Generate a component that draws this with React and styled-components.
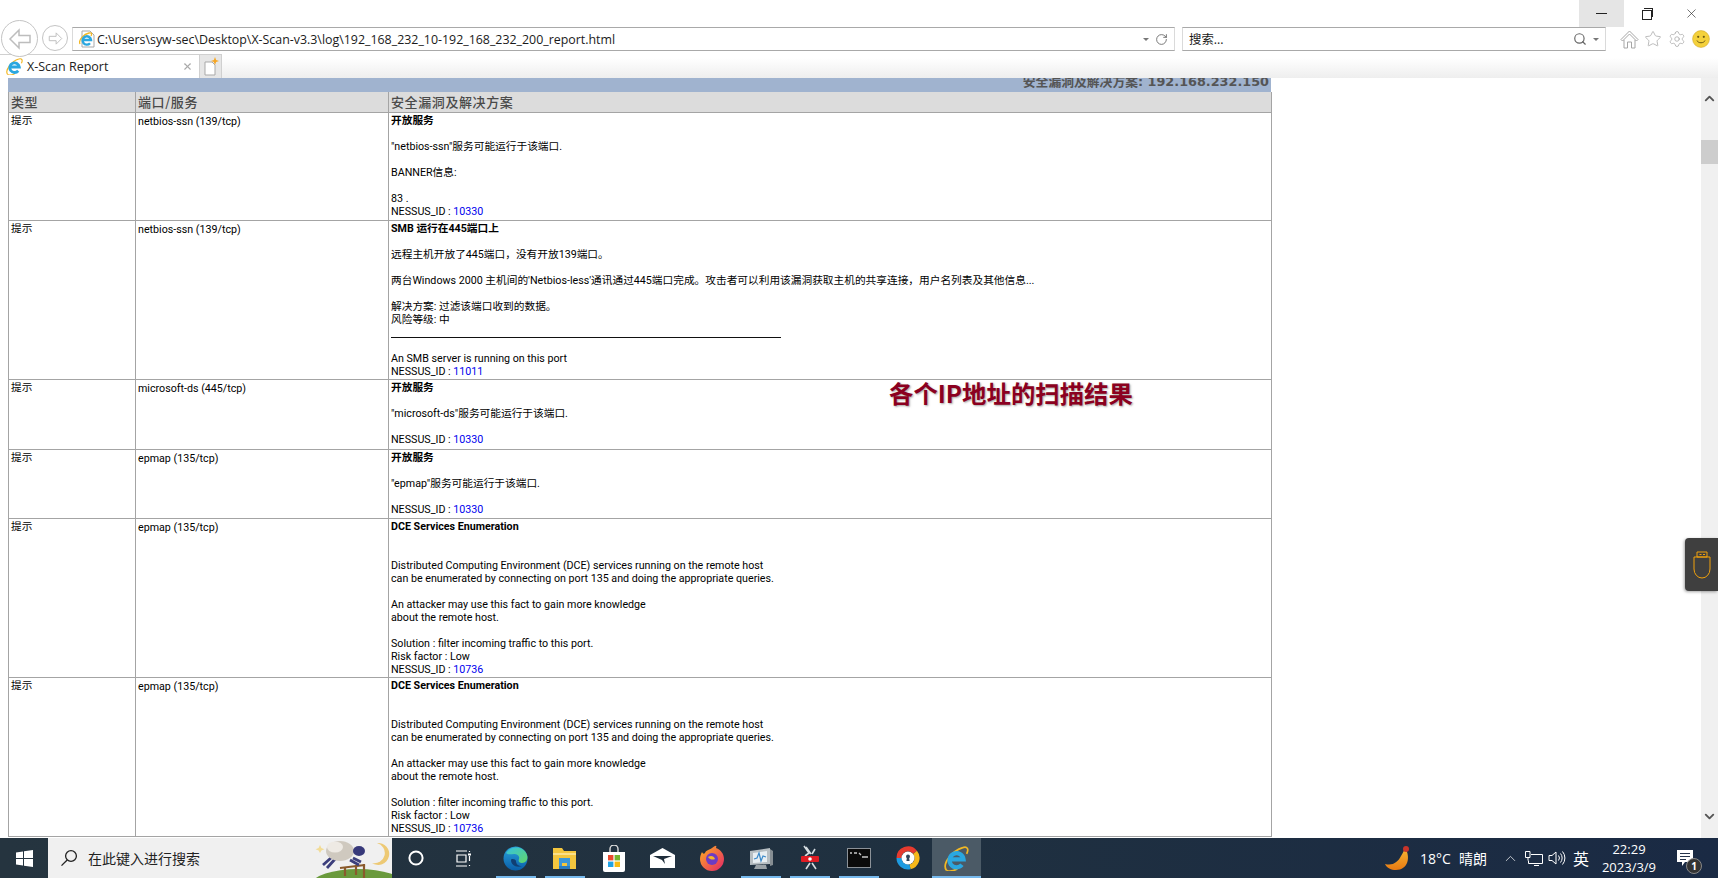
import React from "react";
import styled, { createGlobalStyle } from "styled-components";
import { Star, Settings, X, Search, RotateCw, ChevronUp, ChevronDown } from "lucide-react";

const GlobalStyle = createGlobalStyle`
  html, body { margin: 0; padding: 0; height: 100%; overflow: hidden; background: #fff; }
  #root { height: 100%; }
  * { box-sizing: border-box; }
`;

const CJK = `"Noto Sans CJK SC", sans-serif`;
const UI = `"Open Sans", "Noto Sans CJK SC", sans-serif`;

const ROWS = [
  {
    type: "提示", port: "netbios-ssn (139/tcp)", height: 108, title: "开放服务", id: "10330",
    lines: ["", "\"netbios-ssn\"服务可能运行于该端口.", "", "BANNER信息:", "", "83 ."],
  },
  {
    type: "提示", port: "netbios-ssn (139/tcp)", height: 159, title: "SMB 运行在445端口上", id: "11011",
    lines: [
      "",
      "远程主机开放了445端口，没有开放139端口。",
      "",
      "两台Windows 2000 主机间的'Netbios-less'通讯通过445端口完成。攻击者可以利用该漏洞获取主机的共享连接，用户名列表及其他信息...",
      "",
      "解决方案: 过滤该端口收到的数据。",
      "风险等级: 中",
      "hr",
      "An SMB server is running on this port",
    ],
  },
  {
    type: "提示", port: "microsoft-ds (445/tcp)", height: 70, title: "开放服务", id: "10330",
    lines: ["", "\"microsoft-ds\"服务可能运行于该端口.", ""],
  },
  {
    type: "提示", port: "epmap (135/tcp)", height: 69, title: "开放服务", id: "10330",
    lines: ["", "\"epmap\"服务可能运行于该端口.", ""],
  },
];

const DCE = {
  type: "提示", port: "epmap (135/tcp)", height: 159, title: "DCE Services Enumeration", id: "10736",
  lines: [
    "",
    "",
    "Distributed Computing Environment (DCE) services running on the remote host",
    "can be enumerated by connecting on port 135 and doing the appropriate queries.",
    "",
    "An attacker may use this fact to gain more knowledge",
    "about the remote host.",
    "",
    "Solution : filter incoming traffic to this port.",
    "Risk factor : Low",
  ],
};

const ALL_ROWS = [...ROWS, DCE, DCE];

const Screen = styled.div`
  height: 100vh;
  display: flex;
  flex-direction: column;
  background: #fff;
  overflow: hidden;
`;

const TitleBar = styled.div`
  height: 27px;
  flex: none;
  display: flex;
  justify-content: flex-end;
`;

const WinButton = styled.div`
  width: 45px;
  height: 27px;
  display: flex;
  align-items: center;
  justify-content: center;
  color: #222;
  background: ${(p) => (p.$hover ? "#e5e5e5" : "transparent")};
`;

const CloseSlot = styled(WinButton)`
  margin-right: 4px;
`;

const MinLine = styled.div`
  width: 11px;
  height: 1px;
  background: #222;
`;

const RestoreGlyph = styled.div`
  position: relative;
  width: 10px;
  height: 10px;
  border: 1px solid #222;
  background: #fff;
  margin-top: 2px;
  &::before {
    content: "";
    position: absolute;
    left: 1px;
    top: -3px;
    width: 8px;
    height: 8px;
    border-top: 1px solid #222;
    border-right: 1px solid #222;
  }
`;

const NavBar = styled.div`
  height: 27px;
  flex: none;
  display: flex;
  align-items: flex-start;
  padding-left: 1px;
  position: relative;
  z-index: 1;
`;

const RoundButton = styled.div`
  flex: none;
  width: ${(p) => p.$size}px;
  height: ${(p) => p.$size}px;
  margin-top: ${(p) => p.$top}px;
  margin-right: 4px;
  border: 1px solid #c4c4c4;
  border-radius: 50%;
  background: #fff;
  display: flex;
  align-items: center;
  justify-content: center;
`;

const Field = styled.div`
  height: 24px;
  flex: none;
  width: ${(p) => p.$w}px;
  margin-left: ${(p) => p.$ml || 0}px;
  display: flex;
  align-items: center;
  padding: 0 6px;
  border: 1px solid #dadada;
  border-top-color: #a9a9a9;
  border-bottom-color: #a9a9a9;
  font: 12.4px ${UI};
  color: #1a1a1a;
  background: #fff;
`;

const FieldText = styled.span`
  flex: 1;
  margin-left: ${(p) => p.$ml || 0}px;
  white-space: nowrap;
`;

const FieldTools = styled.div`
  display: flex;
  align-items: center;
  gap: 6px;
  color: #666;
`;

const DropCaret = styled.span`
  width: 0;
  height: 0;
  border-left: 3px solid transparent;
  border-right: 3px solid transparent;
  border-top: 3px solid #777;
`;

const ToolIcons = styled.div`
  display: flex;
  margin-left: 11px;
`;

const ToolIcon = styled.div`
  width: 24px;
  height: 24px;
  display: flex;
  align-items: center;
  justify-content: center;
  color: #a6a6a6;
`;

const TabBar = styled.div`
  height: 24px;
  flex: none;
  display: flex;
  background: linear-gradient(#fff 15%, #eeeeee);
`;

const ActiveTab = styled.div`
  width: 199px;
  display: flex;
  align-items: center;
  padding: 0 6px;
  gap: 4px;
  background: #fff;
  border-top: 1px solid #d0d0d0;
  font: 12.5px ${UI};
  color: #222;
`;

const TabTitle = styled.span`
  flex: 1;
`;

const NewTab = styled.div`
  width: 23px;
  display: flex;
  align-items: center;
  justify-content: center;
  background: #e6e6e6;
  border: 1px solid #d0d0d0;
  border-bottom: 0;
`;

const Main = styled.div`
  flex: 1;
  min-height: 0;
  display: flex;
  position: relative;
`;

const Page = styled.div`
  flex: 1;
  min-width: 0;
  overflow: hidden;
  padding-left: 8px;
`;

const ReportBanner = styled.div`
  width: 1263px;
  height: 14px;
  overflow: hidden;
  background: #a0b3cf;
  text-align: right;
  padding-right: 2px;
  color: #555;
  font: bold 12.8px/14px "DejaVu Sans", ${CJK};
`;

const BannerText = styled.div`
  margin-top: -3px;
`;

const ReportTable = styled.table`
  width: 1263px;
  table-layout: fixed;
  border-collapse: collapse;
  font: 10.7px/13px Roboto, ${CJK};
  color: #000;
`;

const HeadCell = styled.th`
  height: 20px;
  padding: 0 2px;
  background: #dcdcdc;
  border: 1px solid #a4a4a4;
  border-top: 0;
  text-align: left;
  font: 500 13px/19px ${CJK};
  letter-spacing: 0.6px;
  color: #4a4a4a;
`;

const Row = styled.tr`
  height: ${(p) => p.$h}px;
`;

const Cell = styled.td`
  vertical-align: top;
  padding: ${(p) => p.$top || 1}px 2px 0;
  border: 1px solid #a4a4a4;
`;

const Title = styled.div`
  font-weight: bold;
`;

const Line = styled.div`
  min-height: 13px;
  white-space: nowrap;
`;

const Rule = styled.hr`
  width: 390px;
  height: 1px;
  margin: 11px 0 14px;
  border: 0;
  background: #111;
`;

const IdLink = styled.span`
  color: #0000ee;
`;

const Scrollbar = styled.div`
  width: 17px;
  flex: none;
  display: flex;
  flex-direction: column;
  align-items: stretch;
  background: #f0f0f0;
  color: #555;
`;

const ScrollArrow = styled.div`
  height: ${(p) => p.$h}px;
  flex: none;
  display: flex;
  align-items: center;
  justify-content: center;
`;

const Thumb = styled.div`
  height: 24px;
  flex: none;
  margin-top: 22px;
  background: #cdcdcd;
`;

const Spacer = styled.div`
  flex: 1;
`;

const Caption = styled.div`
  position: absolute;
  left: 889px;
  top: 299px;
  font: bold 24.4px/32px ${CJK};
  color: #8b0020;
  text-shadow: 1px 1px 2px rgba(90, 90, 90, 0.55);
  white-space: nowrap;
`;

const UsbTab = styled.div`
  position: absolute;
  right: 0;
  top: 460px;
  width: 33px;
  height: 53px;
  display: flex;
  align-items: center;
  justify-content: center;
  background: #3f3f3f;
  border-radius: 4px 0 0 4px;
  box-shadow: -1px 1px 3px rgba(0, 0, 0, 0.35);
`;

const Taskbar = styled.div`
  height: 40px;
  flex: none;
  display: flex;
  align-items: stretch;
  background: linear-gradient(90deg, #25343f, #1f3040 55%, #1a2a44);
  color: #fff;
`;

const StartButton = styled.div`
  width: 48px;
  display: flex;
  align-items: center;
  justify-content: center;
`;

const SearchBox = styled.div`
  width: 344px;
  display: flex;
  align-items: center;
  padding-left: 12px;
  gap: 10px;
  background: #f0f0f0;
  color: #222;
  font: 14px ${CJK};
  overflow: hidden;
`;

const SearchHint = styled.span`
  flex: 1;
  white-space: nowrap;
`;

const SheepArt = styled.svg`
  width: 104px;
  height: 40px;
  flex: none;
  align-self: flex-end;
`;

const SystemSlot = styled.div`
  width: 48px;
  display: flex;
  align-items: center;
  justify-content: center;
`;

const AppStrip = styled.div`
  display: flex;
  margin-left: 3px;
`;

const AppSlot = styled.div`
  width: 49px;
  display: flex;
  align-items: center;
  justify-content: center;
  background-color: ${(p) => (p.$active ? "#4b5a66" : "transparent")};
  background-image: ${(p) => (p.$open ? "linear-gradient(#76b9ed, #76b9ed)" : "none")};
  background-repeat: no-repeat;
  background-position: center bottom;
  background-size: ${(p) => (p.$active ? "100%" : "40px")} 2px;
`;

const Tray = styled.div`
  margin-left: auto;
  display: flex;
  align-items: center;
  font: 14px ${UI};
`;

const TrayItem = styled.div`
  width: ${(p) => p.$w}px;
  margin-left: ${(p) => p.$ml || 0}px;
  display: flex;
  align-items: center;
  justify-content: center;
  white-space: nowrap;
  font-family: ${(p) => (p.$cjk ? CJK : "inherit")};
  font-size: ${(p) => p.$fs || 14}px;
`;

const Clock = styled.div`
  width: 70px;
  display: flex;
  flex-direction: column;
  align-items: center;
  gap: 1px;
  font: 13px/17px ${UI};
`;

const NotifySlot = styled.div`
  width: 42px;
  height: 100%;
  display: flex;
  align-items: center;
  justify-content: center;
  position: relative;
`;

const NotifyBadge = styled.div`
  position: absolute;
  left: 22px;
  top: 20px;
  width: 16px;
  height: 16px;
  border-radius: 50%;
  background: #333;
  border: 1px solid #888;
  display: flex;
  align-items: center;
  justify-content: center;
  font: bold 10px "Open Sans", sans-serif;
`;

const DesktopPeek = styled.div`
  width: 5px;
  margin-left: 7px;
  border-left: 1px solid #5b6776;
`;

const IeLogo = ({ size = 16 }) => (
  <svg width={size} height={size} viewBox="0 0 32 32" fill="none">
    <path d="M3 31C-3 22 11 6 24 2c6-2 8 2 5 8" stroke="#f2b824" strokeWidth="2.2" />
    <path d="M3 31c3 2 9 1 14-2" stroke="#f2b824" strokeWidth="2.2" />
    <path d="M8 17H25A9 9 0 1 0 23 24" stroke="#2aa7e0" strokeWidth="5.4" />
  </svg>
);

const IeDocIcon = () => (
  <svg width="16" height="18" viewBox="0 0 16 18" fill="none">
    <path d="M3 1h8l4 4v12H3z" fill="#fff" stroke="#a9a9a9" />
    <path d="M1 14C-1 10 5 4 10 3c3-.6 3 1 2 3" stroke="#f2b824" strokeWidth="1.300" />
    <path d="M4 10h8a4.200 4.200 0 1 0-1 3.200" stroke="#2aa7e0" strokeWidth="2.400" />
  </svg>
);

const PageIcon = () => (
  <svg width="18" height="20" viewBox="0 0 18 20" fill="none">
    <path d="M3 5h7l3 3v10H3z" fill="#fff" stroke="#a9a9a9" />
    <path d="M13 0l1.100 2.900L17 4l-2.900 1.100L13 8l-1.100-2.900L9 4l2.900-1.100z" fill="#f6a623" />
  </svg>
);

const HollowArrow = ({ size, flip }) => (
  <svg width={size} height={size} viewBox="0 0 24 24" fill="none" stroke="#bdbdbd" strokeWidth="1.500">
    <path d={flip ? "M13 3l9 9-9 9v-5.500H2v-7h11z" : "M11 3l-9 9 9 9v-5.500h11v-7H11z"} />
  </svg>
);

const HomeIcon = () => (
  <svg width="19" height="19" viewBox="0 0 19 19" fill="none" stroke="#a6a6a6" strokeWidth="1">
    <path d="M9.500 1 1 9.500l1.500 1.500L9.500 4l7 7L18 9.500z" />
    <path d="M4 10v8h3.500v-6h4v6H15v-8" />
  </svg>
);

const Smiley = () => (
  <svg width="18" height="18" viewBox="0 0 18 18">
    <circle cx="9" cy="9" r="8.400" fill="#f4d13c" stroke="#d4a92c" strokeWidth="0.600" />
    <circle cx="6.200" cy="6.800" r="1.100" fill="#6d5a12" />
    <circle cx="11.800" cy="6.800" r="1.100" fill="#6d5a12" />
    <path d="M5 10.500c1 3 7 3 8 0" stroke="#6d5a12" strokeWidth="1" fill="none" />
  </svg>
);

const WinLogo = () => (
  <svg width="17" height="17" viewBox="0 0 17 17" fill="#fff">
    <path d="M0 2.400 7 1.400V8H0zM8 1.300 17 0v8H8zM0 9h7v6.600l-7-1zM8 9h9v8l-9-1.300z" />
  </svg>
);

const Magnifier = () => (
  <svg width="18" height="18" viewBox="0 0 18 18" fill="none" stroke="#222" strokeWidth="1.300">
    <circle cx="11" cy="7" r="5.400" />
    <path d="M7.200 11 1.500 16.600" />
  </svg>
);

const Sheep = () => (
  <SheepArt viewBox="0 0 104 40">
    <ellipse cx="70" cy="46" rx="46" ry="15" fill="#6a9a3c" />
    <path d="M52 30l25-3" stroke="#8a5a2c" strokeWidth="1.800" fill="none" />
    <path d="M57 38v-9M68 37V27M76 40V26" stroke="#8a5a2c" strokeWidth="2.200" />
    <path d="M44 19l-9 8M48 20l-9 10M65 20l8 4M62 22l9 5" stroke="#3c3f7c" strokeWidth="2.800" />
    <ellipse cx="52" cy="13" rx="14" ry="10" fill="#cfc9bf" />
    <ellipse cx="47" cy="9" rx="8" ry="5.500" fill="#eeeae4" />
    <ellipse cx="71" cy="13" rx="6" ry="5" fill="#37397a" />
    <path d="M89 5a11 11 0 1 1-5 20 9 9 0 0 0 5-20z" fill="#edc974" />
    <path d="M32 7l1.400 3 3 1.200-3 1.200L32 15l-1.400-2.600-3-1.200 3-1.200z" fill="#f2dc96" />
  </SheepArt>
);

const EdgeIcon = () => (
  <svg width="25" height="25" viewBox="0 0 25 25">
    <defs>
      <linearGradient id="edgeBlue" x1="0" y1="0" x2="0" y2="1">
        <stop offset="0" stopColor="#2aa3dc" />
        <stop offset="1" stopColor="#0a5ea8" />
      </linearGradient>
      <linearGradient id="edgeGreen" x1="0" y1="0" x2="1" y2="1">
        <stop offset="0" stopColor="#35c1e0" />
        <stop offset="1" stopColor="#62d768" />
      </linearGradient>
    </defs>
    <circle cx="12.500" cy="12.500" r="12" fill="url(#edgeBlue)" />
    <path d="M3 7C7 0 20-1 24 9c1.500 4-1 8-5 8-3 0-4-2-3-4 1-3-2-5-5-5-3.500 0-6 1-8-1z" fill="url(#edgeGreen)" />
    <path d="M8 14c0 5 5 8 11 6-4 0-6-2-6-5 0-2-5-3-5-1z" fill="#103f73" />
  </svg>
);

const FolderIcon = () => (
  <svg width="23" height="22" viewBox="0 0 23 22">
    <path d="M0 1h9l2 3h12v18H0z" fill="#f4c63e" />
    <path d="M0 6h23v2H0z" fill="#fbe08a" />
    <path d="M6 11h11v8h-3v-3H9v3H6z" fill="#3c97d8" />
    <path d="M6 19h11v3H6z" fill="#2a7cc0" />
  </svg>
);

const StoreIcon = () => (
  <svg width="24" height="27" viewBox="0 0 24 27">
    <path d="M8 7V4a4 4 0 0 1 8 0v3" fill="none" stroke="#ddd" strokeWidth="1.400" />
    <path d="M1 7h22v18a2 2 0 0 1-2 2H3a2 2 0 0 1-2-2z" fill="#fff" />
    <rect x="6" y="10" width="5.400" height="5.400" fill="#e8492e" />
    <rect x="12.600" y="10" width="5.400" height="5.400" fill="#74b52e" />
    <rect x="6" y="16.600" width="5.400" height="5.400" fill="#22a3e6" />
    <rect x="12.600" y="16.600" width="5.400" height="5.400" fill="#f8bb14" />
  </svg>
);

const MailIcon = () => (
  <svg width="25" height="20" viewBox="0 0 25 20">
    <path d="M0 7 12.500 0 25 7v13H0z" fill="#fff" />
    <path d="M3 8h19l-8 3 1 5-3-4z" fill="#1e2d3a" />
  </svg>
);

const FirefoxIcon = () => (
  <svg width="24" height="26" viewBox="0 0 24 26">
    <defs>
      <linearGradient id="foxFire" x1="0" y1="0" x2="1" y2="1">
        <stop offset="0" stopColor="#ffb21f" />
        <stop offset="1" stopColor="#e2246a" />
      </linearGradient>
    </defs>
    <path d="M12 3c4-3 5-3 4 0 5 2 8 6 8 11a12 12 0 0 1-24 0c0-3 1-5 2-7 1 2 2 2 3 1 1-3 4-3 7-5z" fill="url(#foxFire)" />
    <circle cx="12" cy="14" r="6" fill="#6d3bc4" />
    <path d="M8 12c3-2 6-1 7 2-2 1-5 1-7-2z" fill="#f7b52a" />
  </svg>
);

const MonitorIcon = () => (
  <svg width="26" height="26" viewBox="0 0 26 26">
    <path d="M2 6l20-3v16L2 20z" fill="#b7bec2" />
    <path d="M5 8l14-2v11L5 18z" fill="#e8eef2" />
    <path d="M6 14l3-1 2-5 2 8 2-5 3 1" fill="none" stroke="#3b89c9" strokeWidth="1.200" />
    <path d="M8 20h10l1 4H6z" fill="#9aa2a7" />
    <path d="M22 4l3 2v14l-3 1z" fill="#868e93" />
  </svg>
);

const KnifeIcon = () => (
  <svg width="20" height="26" viewBox="0 0 20 26" fill="none">
    <path d="M4 1l5 7-4 3M11 9 6 2M12 18l4 6M6 24l4-6M15 4l-3 5" stroke="#d5dce0" strokeWidth="1.600" />
    <rect x="1" y="11" width="18" height="6" rx="1" fill="#e01c24" />
    <circle cx="10" cy="14" r="1.800" fill="#fff" />
  </svg>
);

const CmdIcon = () => (
  <svg width="24" height="20" viewBox="0 0 24 20">
    <rect x="0.500" y="0.500" width="23" height="19" fill="#0b0b0b" stroke="#8c9298" />
    <path d="M3 5h2M7 5h3M12 5l2 2M15 9h6" stroke="#c9c9c9" strokeWidth="1.300" />
  </svg>
);

const GuardIcon = () => (
  <svg width="24" height="24" viewBox="0 0 24 24" fill="none">
    <path d="M3 12a9 9 0 0 1 16-5.700" stroke="#e63a2e" strokeWidth="5" />
    <path d="M19 6.300A9 9 0 0 1 14 20.800" stroke="#f6b81a" strokeWidth="5" />
    <path d="M14 20.800A9 9 0 0 1 3 12" stroke="#1e9be0" strokeWidth="5" />
    <circle cx="12" cy="12" r="6.500" fill="#fff" />
    <circle cx="12" cy="10.500" r="2" fill="#33465a" />
    <path d="M11 11h2l.6 4h-3.200z" fill="#33465a" />
  </svg>
);

const BananaMoon = () => (
  <svg width="26" height="26" viewBox="0 0 26 26">
    <defs>
      <linearGradient id="moonFill" x1="0" y1="0" x2="0" y2="1">
        <stop offset="0" stopColor="#f7b733" />
        <stop offset="1" stopColor="#e87a12" />
      </linearGradient>
    </defs>
    <path d="M20 3c6 9 3 22-9 22-5 0-9-2-11-6 8 2 13-2 16-8 2-3 3-6 4-8z" fill="url(#moonFill)" />
    <circle cx="21" cy="4" r="3" fill="#c9342a" />
  </svg>
);

const NetIcon = () => (
  <svg width="18" height="16" viewBox="0 0 18 16" fill="none" stroke="#fff" strokeWidth="1">
    <path d="M5 1.500H0.500v6H3M5 1.500v6H3M3 7.500v3" />
    <path d="M6 4.500h11.500v9H3.500v-3" />
    <path d="M9 15.500h5" />
  </svg>
);

const SpeakerIcon = () => (
  <svg width="18" height="16" viewBox="0 0 18 16" fill="none" stroke="#fff" strokeWidth="1">
    <path d="M1 5.500h3l4-3.500v12L4 10.500H1z" />
    <path d="M10.500 5.500a4 4 0 0 1 0 5M12.500 3.500a7 7 0 0 1 0 9M14.500 1.500a10 10 0 0 1 0 13" />
  </svg>
);

const UsbIcon = () => (
  <svg width="20" height="28" viewBox="0 0 20 28" fill="none" stroke="#f2a20c" strokeWidth="1">
    <path d="M5 1h10v5H5z" />
    <path d="M7.500 3.500h2M11 3.500h2" />
    <path d="M2 6h16v12a8 9 0 0 1-16 0z" />
  </svg>
);

const TaskViewIcon = () => (
  <svg width="16" height="17" viewBox="0 0 16 17" fill="none" stroke="#fff" strokeWidth="1.200">
    <path d="M0 1h11M0 16h11M1 5h9v7H1zM13.500 1v1M13.500 15v1M13.500 6v5" />
    <rect x="12" y="3.500" width="3" height="2" fill="#fff" stroke="none" />
  </svg>
);

const CortanaIcon = () => (
  <svg width="16" height="16" viewBox="0 0 16 16" fill="none" stroke="#fff" strokeWidth="2">
    <circle cx="8" cy="8" r="6.600" />
  </svg>
);

const NotifyIcon = () => (
  <svg width="16" height="18" viewBox="0 0 16 18">
    <path d="M0 1h16v12h-8l-3 4v-4H0z" fill="#fff" />
    <path d="M3 4.500h10M3 7.500h10M3 10.500h6" stroke="#25334a" strokeWidth="1" />
  </svg>
);

const APPS = [
  { key: "edge", icon: <EdgeIcon />, open: true },
  { key: "folder", icon: <FolderIcon />, open: true },
  { key: "store", icon: <StoreIcon /> },
  { key: "mail", icon: <MailIcon /> },
  { key: "firefox", icon: <FirefoxIcon /> },
  { key: "monitor", icon: <MonitorIcon />, open: true },
  { key: "knife", icon: <KnifeIcon />, open: true },
  { key: "cmd", icon: <CmdIcon />, open: true },
  { key: "guard", icon: <GuardIcon /> },
  { key: "ie", icon: <IeLogo size={25} />, open: true, active: true },
];

const ReportRow = ({ row }) => (
  <Row $h={row.height}>
    <Cell>{row.type}</Cell>
    <Cell $top={2}>{row.port}</Cell>
    <Cell>
      <Title>{row.title}</Title>
      {row.lines.map((text, i) =>
        text === "hr" ? <Rule key={i} /> : <Line key={i}>{text}</Line>
      )}
      <Line>
        NESSUS_ID : <IdLink>{row.id}</IdLink>
      </Line>
    </Cell>
  </Row>
);

export default function App() {
  return (
    <Screen>
      <GlobalStyle />
      <TitleBar>
        <WinButton $hover>
          <MinLine />
        </WinButton>
        <WinButton>
          <RestoreGlyph />
        </WinButton>
        <CloseSlot>
          <X size={15} strokeWidth={1} />
        </CloseSlot>
      </TitleBar>

      <NavBar>
        <RoundButton $size={37} $top={-7}>
          <HollowArrow size={24} />
        </RoundButton>
        <RoundButton $size={26} $top={-2}>
          <HollowArrow size={15} flip />
        </RoundButton>
        <Field $w={1103}>
          <IeDocIcon />
          <FieldText $ml={2}>C:\Users\syw-sec\Desktop\X-Scan-v3.3\log\192_168_232_10-192_168_232_200_report.html</FieldText>
          <FieldTools>
            <DropCaret />
            <RotateCw size={13} strokeWidth={1.6} />
          </FieldTools>
        </Field>
        <Field $w={424} $ml={7}>
          <FieldText>搜索...</FieldText>
          <FieldTools>
            <Search size={14} strokeWidth={2} />
            <DropCaret />
          </FieldTools>
        </Field>
        <ToolIcons>
          <ToolIcon>
            <HomeIcon />
          </ToolIcon>
          <ToolIcon>
            <Star size={18} strokeWidth={1} />
          </ToolIcon>
          <ToolIcon>
            <Settings size={18} strokeWidth={1} />
          </ToolIcon>
          <ToolIcon>
            <Smiley />
          </ToolIcon>
        </ToolIcons>
      </NavBar>

      <TabBar>
        <ActiveTab>
          <IeLogo size={17} />
          <TabTitle>X-Scan Report</TabTitle>
          <X size={11} strokeWidth={2.4} color="#aaa" />
        </ActiveTab>
        <NewTab>
          <PageIcon />
        </NewTab>
      </TabBar>

      <Main>
        <Page>
          <ReportBanner>
            <BannerText>安全漏洞及解决方案: 192.168.232.150</BannerText>
          </ReportBanner>
          <ReportTable>
            <colgroup>
              <col width="127" />
              <col width="253" />
              <col width="883" />
            </colgroup>
            <thead>
              <tr>
                <HeadCell>类型</HeadCell>
                <HeadCell>端口/服务</HeadCell>
                <HeadCell>安全漏洞及解决方案</HeadCell>
              </tr>
            </thead>
            <tbody>
              {ALL_ROWS.map((row, i) => (
                <ReportRow key={i} row={row} />
              ))}
            </tbody>
          </ReportTable>
        </Page>
        <Scrollbar>
          <ScrollArrow $h={40}>
            <ChevronUp size={15} strokeWidth={3} />
          </ScrollArrow>
          <Thumb />
          <Spacer />
          <ScrollArrow $h={44}>
            <ChevronDown size={15} strokeWidth={3} />
          </ScrollArrow>
        </Scrollbar>
        <Caption>各个IP地址的扫描结果</Caption>
        <UsbTab>
          <UsbIcon />
        </UsbTab>
      </Main>

      <Taskbar>
        <StartButton>
          <WinLogo />
        </StartButton>
        <SearchBox>
          <Magnifier />
          <SearchHint>在此键入进行搜索</SearchHint>
          <Sheep />
        </SearchBox>
        <SystemSlot>
          <CortanaIcon />
        </SystemSlot>
        <SystemSlot>
          <TaskViewIcon />
        </SystemSlot>
        <AppStrip>
          {APPS.map((app) => (
            <AppSlot key={app.key} $open={app.open} $active={app.active}>
              {app.icon}
            </AppSlot>
          ))}
        </AppStrip>
        <Tray>
          <TrayItem $w={28}>
            <BananaMoon />
          </TrayItem>
          <TrayItem $w={31} $ml={8}>18°C</TrayItem>
          <TrayItem $w={28} $ml={8} $cjk>晴朗</TrayItem>
          <TrayItem $w={24} $ml={11}>
            <ChevronUp size={17} strokeWidth={1} />
          </TrayItem>
          <TrayItem $w={24}>
            <NetIcon />
          </TrayItem>
          <TrayItem $w={22}>
            <SpeakerIcon />
          </TrayItem>
          <TrayItem $w={26} $cjk $fs={16}>英</TrayItem>
          <Clock>
            <span>22:29</span>
            <span>2023/3/9</span>
          </Clock>
          <NotifySlot>
            <NotifyIcon />
            <NotifyBadge>1</NotifyBadge>
          </NotifySlot>
          <DesktopPeek />
        </Tray>
      </Taskbar>
    </Screen>
  );
}
